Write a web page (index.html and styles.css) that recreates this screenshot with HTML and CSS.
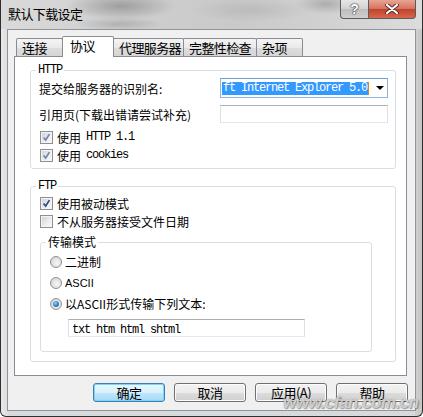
FILE: index.html
```html
<!DOCTYPE html>
<html lang="zh-CN">
<head>
    <meta charset="UTF-8">
    <title>默认下载设定</title>
    <link rel="stylesheet" href="styles.css">
</head>
<body>
    <div class="window">
        <div class="titlebar">
            <div class="title">默认下载设定</div>
            <div class="caption">
                <div class="cap-btn help">?</div>
                <div class="cap-btn close">
                    <svg width="14" height="10" viewBox="0 0 14 10">
                        <path d="M2 1 L12 9 M12 1 L2 9" stroke="#5a2a22" stroke-width="4" stroke-linecap="round"/>
                        <path d="M2 1 L12 9 M12 1 L2 9" stroke="#fff" stroke-width="2.2" stroke-linecap="round"/>
                    </svg>
                </div>
            </div>
        </div>
        <div class="client">
            <div class="tabs">
                <div class="tab w47">连接</div>
                <div class="tab active">协议</div>
                <div class="tab w71">代理服务器</div>
                <div class="tab w74">完整性检查</div>
                <div class="tab w47">杂项</div>
            </div>
            <div class="panel">
                <fieldset class="group">
                    <legend class="mono">HTTP</legend>
                    <div class="field first">
                        <span>提交给服务器的识别名:</span>
                        <div class="combo">
                            <span class="selection mono">ft Internet Explorer 5.0</span>
                            <span class="cursor"></span>
                            <span class="arrow"></span>
                        </div>
                    </div>
                    <div class="field second">
                        <span>引用页(下载出错请尝试补充)</span>
                        <div class="textbox"></div>
                    </div>
                    <div class="checks">
                        <div class="check">
                            <span class="cb light"><svg viewBox="0 0 13 13"><path d="M3 6.5 L5.5 9.5 L10 2.5" /></svg></span>
                            <span>使用</span><span class="mono spaced">HTTP 1.1</span>
                        </div>
                        <div class="check">
                            <span class="cb light"><svg viewBox="0 0 13 13"><path d="M3 6.5 L5.5 9.5 L10 2.5" /></svg></span>
                            <span>使用</span><span class="mono spaced">cookies</span>
                        </div>
                    </div>
                </fieldset>

                <fieldset class="group ftp">
                    <legend class="mono">FTP</legend>
                    <div class="checks top">
                        <div class="check">
                            <span class="cb"><svg viewBox="0 0 13 13"><path d="M3 6.5 L5.5 9.5 L10 2.5" /></svg></span>
                            <span>使用被动模式</span>
                        </div>
                        <div class="check">
                            <span class="cb"></span>
                            <span>不从服务器接受文件日期</span>
                        </div>
                    </div>
                    <fieldset class="group inner">
                        <legend>传输模式</legend>
                        <div class="radio"><span class="rb"></span><span>二进制</span></div>
                        <div class="radio"><span class="rb"></span><span class="ascii">ASCII</span></div>
                        <div class="radio"><span class="rb on"></span><span>以ASCII形式传输下列文本:</span></div>
                        <div class="textbox wide"><span class="mono">txt htm html shtml</span></div>
                    </fieldset>
                </fieldset>
            </div>
            <div class="buttons">
                <div class="btn default">确定</div>
                <div class="btn">取消</div>
                <div class="btn">应用(A)</div>
                <div class="btn">帮助</div>
            </div>
        </div>
        <div class="watermark">www.cfan.com.cn</div>
    </div>
</body>
</html>
```

FILE: styles.css
```css
html, body{
    margin: 0;
    padding: 0;
    background: #fff;
}
body{
    font-family: "Noto Sans CJK SC", sans-serif;
    font-size: 12px;
    color: #000;
}
.mono{
    font-family: "Liberation Mono", "Noto Sans CJK SC", monospace;
    font-size: 12px;
    letter-spacing: -1.2px;
}

/* window frame */
.window{
    position: relative;
    width: 423px;
    height: 417px;
    box-sizing: border-box;
    border: 1px solid #2f2f2f;
    border-top: none;
    border-radius: 0 0 6px 6px;
    overflow: hidden;
    background:
        linear-gradient(90deg, #e8e8e8 0px, #dcdcdc 7px, transparent 7px, transparent 414px, #d0d0d0 414px, #c6c6c6 421px),
        #d8d9db;
}
.titlebar{
    display: flex;
    height: 29px;
    padding-left: 7px;
    background:
        radial-gradient(ellipse 55px 14px at 120px 6px, rgba(125,125,125,.6), transparent),
        radial-gradient(ellipse 45px 7px at 118px 24px, rgba(140,140,140,.45), transparent),
        radial-gradient(ellipse 60px 12px at 250px 10px, rgba(160,160,160,.35), transparent),
        radial-gradient(ellipse 30px 10px at 325px 4px, rgba(120,120,120,.4), transparent),
        linear-gradient(90deg, #dadada, #cfcfcf 30%, #c9c9c9 55%, #d2d2d2 80%, #dcdcdc);
}
.title{
    margin-top: 6px;
    line-height: 16px;
    font-size: 13px;
    letter-spacing: -0.6px;
}
.caption{
    display: flex;
    margin-left: auto;
    margin-right: 6px;
}
.cap-btn{
    height: 19px;
    box-sizing: border-box;
    border: 1px solid #5c5c5c;
    border-top: none;
    display: flex;
    align-items: center;
    justify-content: center;
}
.help{
    width: 28px;
    border-right: none;
    border-radius: 0 0 0 4px;
    background: linear-gradient(#e6e6e6, #d2d2d2 50%, #bdbdbd 51%, #cfcfcf);
    color: #fff;
    font: bold 14px "Liberation Sans", sans-serif;
    text-shadow: 0 0 1px #333, 0 0 1px #333, 0 0 2px #555;
}
.close{
    width: 48px;
    border-radius: 0 0 4px 0;
    background: linear-gradient(#e8a493, #d4715c 50%, #c1432d 51%, #d8674c);
}

/* client area */
.client{
    width: 409px;
    height: 382px;
    margin-left: 6px;
    box-sizing: border-box;
    border: 1px solid #8f959c;
    background: #f0f0f0;
}
.tabs{
    display: flex;
    align-items: flex-end;
    height: 26px;
    padding-left: 8px;
}
.tab{
    height: 18px;
    box-sizing: border-box;
    border: 1px solid #898c95;
    border-bottom: none;
    border-radius: 2px 2px 0 0;
    margin-left: -1px;
    padding-left: 5px;
    font-size: 13px;
    letter-spacing: -0.6px;
    line-height: 18px;
    background: linear-gradient(#f4f4f4, #e9e9e9 50%, #dddddd 51%, #d6d6d6);
}
.tab:first-child{
    margin-left: 0;
}
.w47{ width: 47px; }
.w71{ width: 71px; }
.w74{ width: 74px; }
.tab.active{
    width: 52px;
    height: 21px;
    margin-bottom: -1px;
    padding-left: 7px;
    line-height: 17px;
    position: relative;
    z-index: 1;
    background: #fff;
}

.panel{
    width: 393px;
    height: 320px;
    margin-left: 6px;
    box-sizing: border-box;
    border: 1px solid #898c95;
    background: #fff;
    overflow: hidden;
}

/* group boxes */
.group{
    width: 366px;
    margin: 7px 0 0 15px;
    padding: 0 7px 4px 0;
    box-sizing: border-box;
    border: 1px solid #d5dfe5;
    border-radius: 3px;
    min-width: 0;
}
.group legend{
    margin-left: 5px;
    padding: 0 2px;
    line-height: 12px;
}
.group.ftp{
    margin-top: 11px;
    padding-bottom: 9px;
}
.group.inner{
    width: 332px;
    margin: 6px 0 0 9px;
    padding: 0 0 14px 0;
}
.group.inner legend{
    margin-left: 5px;
    font-size: 12px;
}

.field{
    display: flex;
    align-items: center;
    justify-content: space-between;
    padding-left: 8px;
}
.field.first{
    height: 20px;
    margin-top: 2px;
}
.field.second{
    height: 18px;
    margin-top: 7px;
}
.combo{
    width: 168px;
    height: 20px;
    box-sizing: border-box;
    border: 1px solid #8fb6dc;
    border-top-color: #6f9fcf;
    display: flex;
    align-items: center;
    background: #fff;
}
.selection{
    width: 146px;
    height: 13px;
    margin-left: 1px;
    padding-left: 1px;
    box-sizing: border-box;
    background: #3399ff;
    color: #fff;
    line-height: 13px;
    white-space: nowrap;
    overflow: hidden;
}
.cursor{
    width: 1px;
    height: 13px;
    background: #e0822a;
}
.arrow{
    margin-left: 7px;
    width: 0;
    height: 0;
    border-left: 4px solid transparent;
    border-right: 4px solid transparent;
    border-top: 4px solid #000;
}
.textbox{
    width: 168px;
    height: 18px;
    box-sizing: border-box;
    border: 1px solid #dbdfe6;
    border-top-color: #abadb3;
    border-bottom-color: #e3e9ef;
    background: #fff;
}
.textbox.wide{
    width: 237px;
    margin: 5px 0 0 27px;
    padding-left: 3px;
    line-height: 16px;
}

.checks{
    margin-top: 5px;
}
.checks.top{
    margin-top: 2px;
}
.check{
    display: flex;
    align-items: center;
    height: 18px;
    padding-left: 9px;
}
.spaced{
    margin-left: 5px;
}
.cb{
    width: 13px;
    height: 13px;
    box-sizing: border-box;
    border: 1px solid #8e8f8f;
    margin-right: 4px;
    background: linear-gradient(135deg, #cfcfcf, #eeeeee 60%, #fbfbfb);
    box-shadow: inset 0 0 0 1px #f4f4f4;
}
.cb svg{
    display: block;
    width: 11px;
    height: 11px;
}
.cb svg path{
    fill: none;
    stroke: #2c4c90;
    stroke-width: 2;
}
.cb.light svg path{
    stroke: #6f86b8;
}

.radio{
    display: flex;
    align-items: center;
    height: 21px;
    padding-left: 9px;
}
.radio:first-of-type{
    margin-top: 3px;
}
.rb{
    width: 12px;
    height: 12px;
    box-sizing: border-box;
    border: 1px solid #8e8f8f;
    border-radius: 50%;
    margin-right: 3px;
    background: radial-gradient(circle at 60% 60%, #f6f6f6, #d0d0d0);
    display: flex;
    align-items: center;
    justify-content: center;
}
.rb.on::after{
    content: "";
    width: 6px;
    height: 6px;
    border-radius: 50%;
    background: radial-gradient(circle at 40% 35%, #8ed3fb, #1a6bb8 70%, #0f4f8f);
}
.ascii{
    font-family: "Liberation Sans Narrow", "Liberation Sans", sans-serif;
    font-size: 11px;
}

/* dialog buttons */
.buttons{
    display: flex;
    justify-content: flex-end;
    gap: 9px;
    margin-top: 7px;
    padding-right: 7px;
}
.btn{
    width: 72px;
    height: 19px;
    box-sizing: border-box;
    border: 1px solid #707070;
    border-radius: 3px;
    text-align: center;
    font-size: 13px;
    letter-spacing: -0.5px;
    line-height: 17px;
    background: linear-gradient(#f2f2f2, #ebebeb 50%, #dddddd 51%, #cfcfcf);
    box-shadow: inset 0 0 0 1px #fcfcfc;
}
.btn.default{
    border-color: #3c7fb1;
    box-shadow: inset 0 0 0 1px #7fd4f5;
    background: linear-gradient(#eaf6fd, #d9f0fc 50%, #bee6fd 51%, #a7d9f5);
}

.watermark{
    position: absolute;
    left: 282px;
    top: 393px;
    font: italic bold 17px "Liberation Sans", sans-serif;
    letter-spacing: -0.5px;
    color: rgba(235, 235, 235, 0.75);
    text-shadow: 0 0 1px #777, 1px 1px 1px rgba(0,0,0,.35);
}
```
